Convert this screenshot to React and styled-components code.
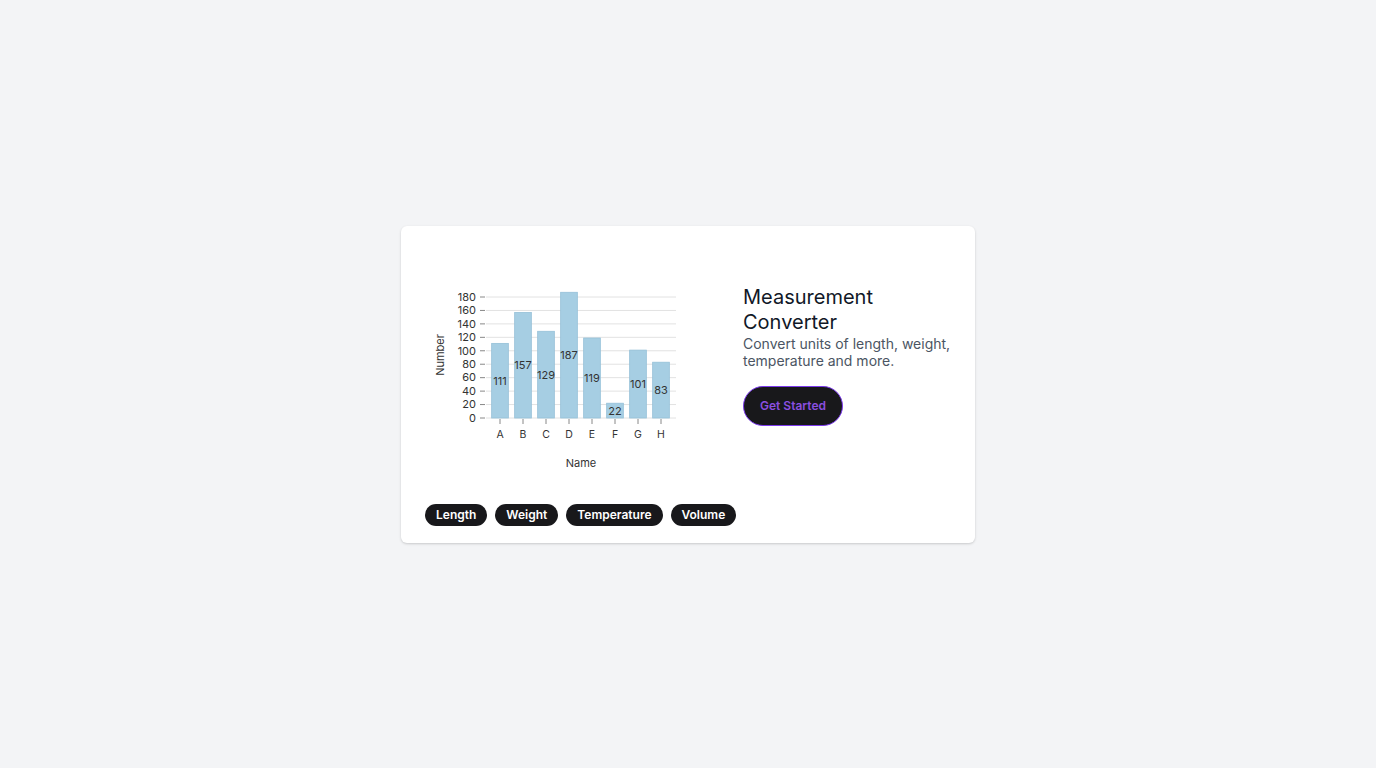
import styled, { createGlobalStyle } from "styled-components";

const GlobalStyle = createGlobalStyle`
  html, body {
    margin: 0;
    padding: 0;
    background: #f3f4f6;
    font-family: Inter, "Noto Sans", sans-serif;
  }
`;

const Page = styled.div`
  min-height: 100vh;
  display: flex;
  align-items: center;
  justify-content: center;
`;

const Card = styled.div`
  width: 574px;
  box-sizing: border-box;
  background: #ffffff;
  border-radius: 6px;
  box-shadow: 0 1px 3px rgba(0, 0, 0, 0.12), 0 1px 2px rgba(0, 0, 0, 0.06);
  padding: 24px 18px 17px 24px;
  display: flex;
  flex-direction: column;
  gap: 16px;
`;

const TopRow = styled.div`
  display: flex;
  align-items: flex-start;
  gap: 24px;
`;

const ChartBox = styled.div`
  width: 294px;
  height: 238px;
  flex-shrink: 0;

  svg {
    display: block;
  }
`;

const Info = styled.div`
  flex: 1;
  margin-top: 35px;
  display: flex;
  flex-direction: column;
  align-items: flex-start;
`;

const Title = styled.h2`
  margin: 0;
  font-size: 20px;
  line-height: 25px;
  font-weight: 400;
  color: #111827;
`;

const Description = styled.p`
  margin: 0;
  font-size: 14px;
  line-height: 17px;
  color: #4b5563;
`;

const StartButton = styled.button`
  margin-top: 17px;
  height: 40px;
  padding: 0 16px;
  border-radius: 999px;
  border: 1px solid #7c3aed;
  background: #18181b;
  color: #8b4fe0;
  font-family: Inter, sans-serif;
  font-size: 12px;
  font-weight: 600;
  cursor: pointer;
`;

const Tags = styled.div`
  display: flex;
  gap: 8px;
`;

const Tag = styled.span`
  background: #18181b;
  color: #ffffff;
  font-size: 12px;
  font-weight: 600;
  line-height: 14px;
  padding: 4px 11px;
  border-radius: 999px;
`;

const data = [
  { name: "A", value: 111 },
  { name: "B", value: 157 },
  { name: "C", value: 129 },
  { name: "D", value: 187 },
  { name: "E", value: 119 },
  { name: "F", value: 22 },
  { name: "G", value: 101 },
  { name: "H", value: 83 },
];

const ticks = [0, 20, 40, 60, 80, 100, 120, 140, 160, 180];
const baseY = 168;
const scale = 121 / 180;
const barWidth = 16.7;

const BarChart = () => (
  <svg width="294" height="238" fontFamily="Inter, sans-serif">
    {ticks.map((t) => {
      const y = baseY - t * scale;
      return (
        <g key={t}>
          <line x1="61" x2="251" y1={y} y2={y} stroke="#e2e2e2" strokeWidth="1" />
          <line x1="55" x2="60" y1={y} y2={y} stroke="#888" strokeWidth="1" />
          <text x="51" y={y + 3.8} fontSize="11" fill="#333" textAnchor="end">
            {t}
          </text>
        </g>
      );
    })}
    {data.map((d, i) => {
      const cx = 75 + 23 * i;
      const h = d.value * scale;
      return (
        <g key={d.name}>
          <rect
            x={cx - barWidth / 2}
            y={baseY - h}
            width={barWidth}
            height={h}
            fill="#a6cee3"
            stroke="#95c0d8"
            strokeWidth="0.8"
          />
          <text x={cx} y={baseY - h / 2 + 4} fontSize="11" fill="#333" textAnchor="middle">
            {d.value}
          </text>
          <line x1={cx} x2={cx} y1="169" y2="174" stroke="#888" strokeWidth="1" />
          <text x={cx} y="188" fontSize="10.5" fill="#333" textAnchor="middle">
            {d.name}
          </text>
        </g>
      );
    })}
    <text x="156" y="217" fontSize="11" fill="#333" textAnchor="middle">
      Name
    </text>
    <text
      x="0"
      y="0"
      fontSize="11"
      fill="#333"
      textAnchor="middle"
      transform="translate(19 105) rotate(-90)"
    >
      Number
    </text>
  </svg>
);

const App = () => {
  const units = ["Length", "Weight", "Temperature", "Volume"];

  return (
    <Page>
      <GlobalStyle />
      <Card>
        <TopRow>
          <ChartBox>
            <BarChart />
          </ChartBox>
          <Info>
            <Title>Measurement Converter</Title>
            <Description>Convert units of length, weight, temperature and more.</Description>
            <StartButton>Get Started</StartButton>
          </Info>
        </TopRow>
        <Tags>
          {units.map((u) => (
            <Tag key={u}>{u}</Tag>
          ))}
        </Tags>
      </Card>
    </Page>
  );
};

export default App;
